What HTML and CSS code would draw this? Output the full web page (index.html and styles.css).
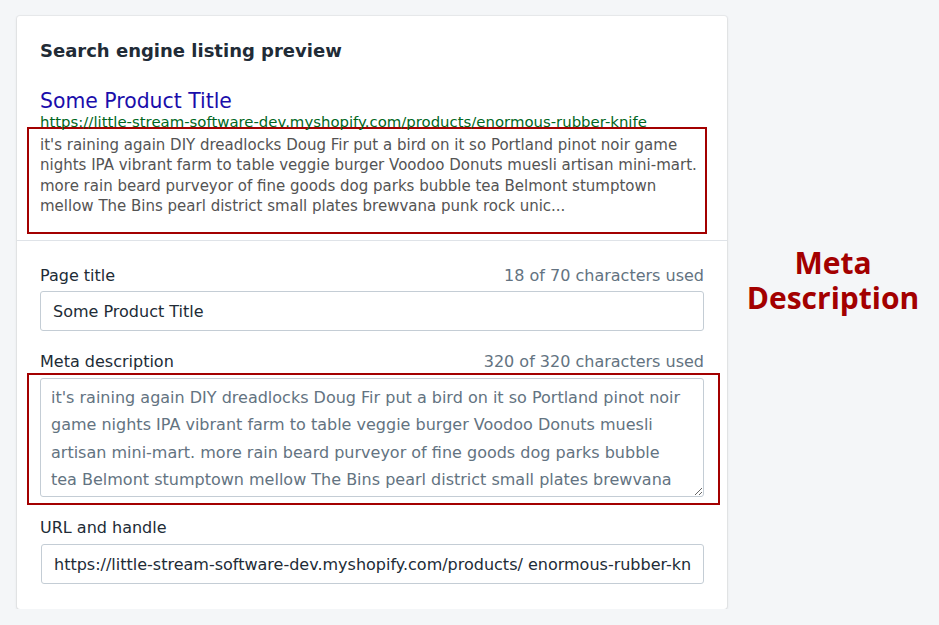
FILE: index.html
```html
<!DOCTYPE html>
<html lang="en">
<head>
<meta charset="utf-8">
<title>Search engine listing preview</title>
<link rel="stylesheet" href="styles.css">
</head>
<body>
<div class="page">
  <div class="card">
    <div class="section preview-section">
      <h2 class="heading">Search engine listing preview</h2>
      <div class="serp-title">Some Product Title</div>
      <div class="serp-url">https://little-stream-software-dev.myshopify.com/products/enormous-rubber-knife</div>
      <div class="annot annot-preview">
        <p class="serp-desc">it's raining again DIY dreadlocks Doug Fir put a bird on it so Portland pinot noir game nights IPA vibrant farm to table veggie burger Voodoo Donuts muesli artisan mini-mart. more rain beard purveyor of fine goods dog parks bubble tea Belmont stumptown mellow The Bins pearl district small plates brewvana punk rock unic...</p>
      </div>
    </div>
    <div class="section form-section">
      <div class="field">
        <div class="label-row">
          <label class="label" for="pt">Page title</label>
          <span class="count">18 of 70 characters used</span>
        </div>
        <input id="pt" class="input" type="text" value="Some Product Title">
      </div>
      <div class="field">
        <div class="label-row">
          <label class="label" for="md">Meta description</label>
          <span class="count">320 of 320 characters used</span>
        </div>
        <div class="annot annot-meta">
          <textarea id="md" class="textarea">it's raining again DIY dreadlocks Doug Fir put a bird on it so Portland pinot noir game nights IPA vibrant farm to table veggie burger Voodoo Donuts muesli artisan mini-mart. more rain beard purveyor of fine goods dog parks bubble tea Belmont stumptown mellow The Bins pearl district small plates brewvana punk rock unicorn fixie food carts</textarea>
        </div>
      </div>
      <div class="field field-url">
        <div class="label-row">
          <label class="label" for="url">URL and handle</label>
        </div>
        <input id="url" class="input input-url" type="text" value="https://little-stream-software-dev.myshopify.com/products/ enormous-rubber-knife">
      </div>
    </div>
  </div>
  <div class="callout"><div>Meta</div><div>Description</div></div>
</div>
</body>
</html>
```

FILE: styles.css
```css
* { box-sizing: border-box; }

html, body {
  margin: 0;
  padding: 0;
  background: #f4f6f8;
}

body {
  font-family: "DejaVu Sans", sans-serif;
  color: #212b36;
}

.page {
  display: flex;
  align-items: flex-start;
  padding: 16px 0 0 17px;
}

.card {
  width: 710px;
  flex: none;
  background: #ffffff;
  border-radius: 3px;
  box-shadow: 0 0 0 1px rgba(63, 63, 68, 0.05), 0 1px 3px 0 rgba(63, 63, 68, 0.15);
}

.section {
  padding: 0 23px;
}

.preview-section {
  padding-top: 23px;
  padding-bottom: 6px;
  border-bottom: 1px solid #dfe3e8;
}

.heading {
  margin: 0;
  font-size: 18px;
  line-height: 24px;
  font-weight: bold;
  color: #212b36;
}

.serp-title {
  margin-top: 26px;
  font-size: 20.4px;
  line-height: 24px;
  color: #1a0dab;
}

.serp-url {
  font-size: 14.9px;
  line-height: 18px;
  color: #006621;
  white-space: nowrap;
}

.annot {
  border: 2px solid #a30000;
}

.annot-preview {
  margin: -4px -3px 0 -13px;
  padding: 6px 1px 16px 11px;
}

.serp-desc {
  margin: 0;
  font-size: 15px;
  line-height: 20.3px;
  color: #545454;
}

.form-section {
  padding-top: 24px;
  padding-bottom: 25px;
}

.field + .field {
  margin-top: 20px;
}

.field-url {
  margin-top: 12px !important;
}

.label-row {
  display: flex;
  justify-content: space-between;
  align-items: baseline;
  padding-top: 1px;
  margin-bottom: 5px;
  font-size: 16px;
  line-height: 20px;
}

.field-url .label-row {
  margin-bottom: 6px;
}

.label {
  color: #212b36;
}

.count {
  color: #637381;
}

.input {
  display: block;
  width: 100%;
  height: 40px;
  padding: 0 12px;
  border: 1px solid #c4cdd5;
  border-radius: 3px;
  background: #ffffff;
  font-family: "DejaVu Sans", sans-serif;
  font-size: 16px;
  color: #212b36;
  outline: none;
}

.input-url {
  width: calc(100% - 1px);
  margin-left: 1px;
}

.annot-meta {
  margin: -4px -16px 0 -13px;
  padding: 3px 14px 6px 11px;
}

.textarea {
  display: block;
  width: 100%;
  height: 119px;
  padding: 5px 18px 5px 10px;
  border: 1px solid #c4cdd5;
  border-radius: 3px;
  background: #ffffff;
  font-family: "DejaVu Sans", sans-serif;
  font-size: 16px;
  line-height: 27.3px;
  color: #637381;
  overflow: hidden;
  resize: both;
  outline: none;
}

.callout {
  flex: 1;
  margin-top: 229px;
  text-align: center;
  font-family: "Open Sans", sans-serif;
  font-weight: bold;
  font-size: 30px;
  line-height: 35px;
  color: #a30000;
}
```
